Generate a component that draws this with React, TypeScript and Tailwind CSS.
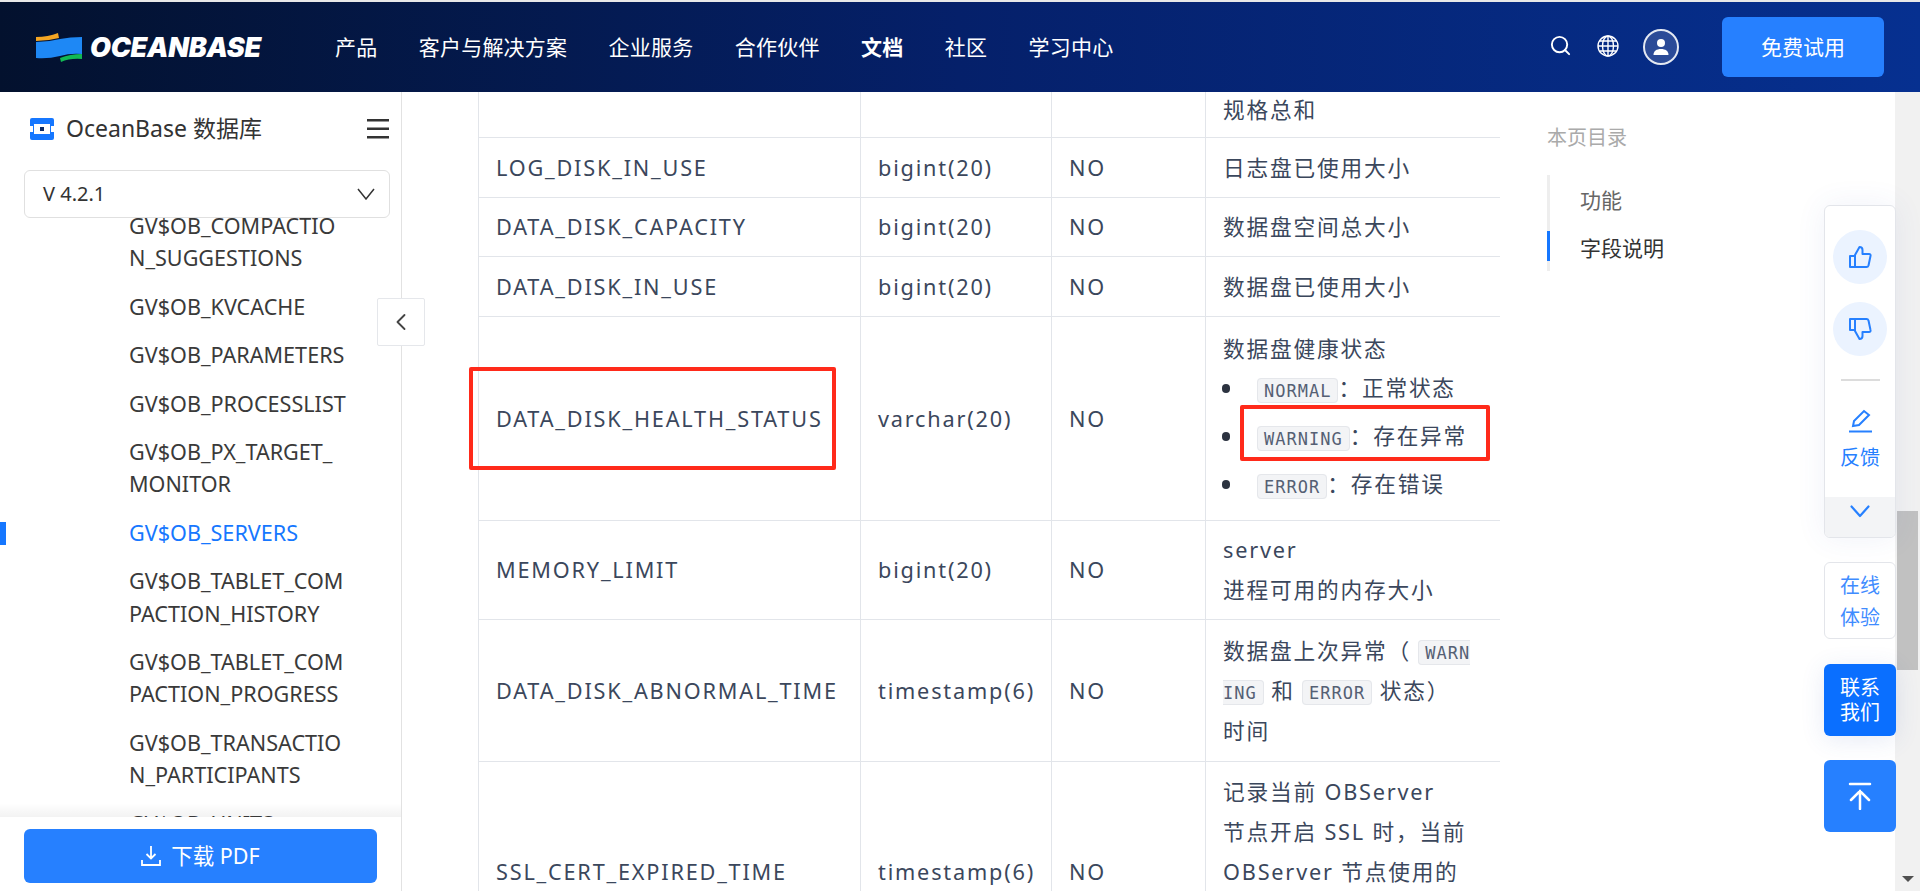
import { ChevronLeft, Search } from "lucide-react";

const navLinks = ["产品", "客户与解决方案", "企业服务", "合作伙伴", "文档", "社区", "学习中心"];

const treeItems = [
	"GV$OB_COMPACTION_SUGGESTIONS",
	"GV$OB_KVCACHE",
	"GV$OB_PARAMETERS",
	"GV$OB_PROCESSLIST",
	"GV$OB_PX_TARGET_MONITOR",
	"GV$OB_SERVERS",
	"GV$OB_TABLET_COMPACTION_HISTORY",
	"GV$OB_TABLET_COMPACTION_PROGRESS",
	"GV$OB_TRANSACTION_PARTICIPANTS",
	"GV$OB_UNITS",
];

const Code = ({ children }: { children: string }) => (
	<code className="break-all rounded-[4px] border border-[#e5e7eb] bg-[#f3f4f6] px-[6px] py-[1.5px] font-['DejaVu_Sans_Mono',monospace] text-[17px] leading-none tracking-[1px] text-[#556074]">
		{children}
	</code>
);

const Row = ({ name, type, pad = "", children }: { name: string; type: string; pad?: string; children: React.ReactNode }) => (
	<tr className={`border-b border-[#e2e5ea] ${pad}`}>
		<td className="border-x border-[#e2e5ea] py-[9.5px] pl-[17px] pr-0 align-middle">{name}</td>
		<td className="border-r border-[#e2e5ea] py-[9.5px] pl-[17px] align-middle">{type}</td>
		<td className="border-r border-[#e2e5ea] py-[9.5px] pl-[17px] align-middle">{type ? "NO" : ""}</td>
		<td className="py-[9.5px] pl-[17px] pr-[26px] align-middle">{children}</td>
	</tr>
);

const Bullet = ({ children }: { children: React.ReactNode }) => (
	<li className="relative h-[48px] leading-[48px]">
		<span className="absolute -left-[35px] top-[20px] h-[9px] w-[8px] rounded-full bg-[#2c3340]" />
		{children}
	</li>
);

const Thumb = ({ down }: { down?: boolean }) => (
	<svg width="24" height="24" viewBox="0 0 24 24" fill="none" stroke="#2680ff" strokeWidth="2" strokeLinejoin="round">
		<g transform={down ? "translate(0 24) scale(1 -1)" : undefined}>
			<path d="M7 22V10l4.500-8q3 0 3 3v4H21q2 0 1.500 2l-2 9.500Q20 22 18.500 22z" />
			<path d="M2 11h5v11H2z" />
		</g>
	</svg>
);

const Logo = () => (
	<div className="flex items-center gap-[8px]">
		<svg width="46" height="29" viewBox="0 0 46 29">
			<path d="M0 4 Q12 4 22 0 L23 5 Q12 8 0 8Z" fill="#f5a623" />
			<path d="M0 9 Q12 9 24 6 Q34 4 46 4 V21 Q34 20 24 23 Q12 26 0 25Z" fill="#1e88f5" />
			<path d="M24 25 Q34 21 46 21 V26 Q34 25 25 29Z" fill="#12b954" />
		</svg>
		<span className="font-['Inter',sans-serif] text-[27px] font-black italic leading-none tracking-[-0.3px] text-white">
			OCEANBASE
		</span>
	</div>
);

const Header = () => (
	<header className="flex h-[90px] shrink-0 items-center bg-linear-to-r from-[#03112e] via-[#05206a] to-[#063090] pl-[36px] pr-[36px]">
		<Logo />
		<nav className="ml-[74px] flex gap-[41.400px] pt-[2px] text-[21px] tracking-[0.2px] text-white">
			{navLinks.map((link) => (
				<a key={link} className={link === "文档" ? "font-bold" : ""}>
					{link}
				</a>
			))}
		</nav>
		<div className="ml-auto flex items-center">
			<Search size={23} strokeWidth={2} className="-mt-[3px] text-white" />
			<svg width="22" height="22" viewBox="0 0 22 22" fill="none" stroke="white" strokeWidth="1.400" className="ml-[25px] -mt-[3px]">
				<circle cx="11" cy="11" r="10" />
				<ellipse cx="11" cy="11" rx="5.500" ry="10" />
				<path d="M11 1v20M1 11h20M2.500 6h17M2.500 16h17" />
			</svg>
			<div className="ml-[24px] flex h-[36px] w-[36px] items-center justify-center rounded-full border-2 border-[#e3e8f2] bg-white/15">
				<svg width="18" height="18" viewBox="0 0 18 18" fill="white">
					<circle cx="9" cy="5" r="4" />
					<path d="M1.500 17c0-4 3-6 7.500-6s7.500 2 7.500 6z" />
				</svg>
			</div>
			<button className="ml-[43px] h-[60px] w-[162px] rounded-[6px] bg-[#2680ff] pt-[1px] text-[21px] text-white">免费试用</button>
		</div>
	</header>
);

const Sidebar = () => (
	<aside className="relative flex w-[402px] shrink-0 flex-col border-r border-[#e2e2e2] bg-white">
		<div className="flex h-[78px] shrink-0 items-center pb-[5px] pl-[30px] pr-[12px]">
			<svg width="24" height="22" viewBox="0 0 24 22">
				<rect width="24" height="22" rx="2" fill="#1677ff" />
				<rect x="4" y="6" width="16" height="10" fill="white" />
				<rect x="0" y="8" width="3" height="6" fill="white" />
				<rect x="21" y="8" width="3" height="6" fill="white" />
				<rect x="10" y="9" width="4" height="4" fill="#0b2a66" />
			</svg>
			<span className="ml-[12px] text-[23px] text-[#333]">OceanBase 数据库</span>
			<svg width="22" height="20" viewBox="0 0 22 20" className="ml-auto" fill="#333">
				<rect width="22" height="2.500" />
				<rect y="8.500" width="22" height="2.500" />
				<rect y="17" width="22" height="2.500" />
			</svg>
		</div>
		<div className="z-10 ml-[24px] mr-[11px] flex h-[48px] shrink-0 items-center justify-between rounded-[6px] border border-[#e0e0e0] bg-white pl-[18px] pr-[14px] text-[20px] text-[#333]">
			V 4.2.1
			<svg width="18" height="12" viewBox="0 0 18 12" fill="none" stroke="#333" strokeWidth="1.500">
				<path d="M1 1l8 10 8-10" />
			</svg>
		</div>
		<div className="relative min-h-0 flex-1 overflow-hidden">
			<ul className="-mt-[16px] pl-[129px] text-[21.600px] leading-[32.400px] text-[#3a3a3a]">
				{treeItems.map((item) => (
					<li key={item} className={`relative w-[345px] break-all py-[8px] pr-[126px] ${item === "GV$OB_SERVERS" ? "text-[#1677ff]" : ""}`}>
						{item === "GV$OB_SERVERS" && <span className="absolute -left-[129px] top-[13px] h-[23px] w-[6px] bg-[#1677ff]" />}
						{item}
					</li>
				))}
			</ul>
			<div className="absolute inset-x-0 bottom-0 h-[14px] bg-linear-to-b from-transparent to-black/5" />
		</div>
		<div className="z-10 h-[74px] shrink-0 bg-white pl-[24px] pt-[12px]">
			<button className="flex h-[54px] w-[353px] items-center justify-center gap-[10px] rounded-[6px] bg-[#2680ff] text-[21.500px] text-white">
				<svg width="20" height="20" viewBox="0 0 20 20" fill="none" stroke="white" strokeWidth="1.800">
					<path d="M10 0v12M5.500 8l4.500 4.500L14.500 8M1 14v5h18v-5" />
				</svg>
				下载 PDF
			</button>
		</div>
		<button className="absolute left-[377px] top-[206px] z-20 flex h-[48px] w-[48px] items-center justify-center rounded-[2px] border border-[#e5e7eb] bg-white text-[#444]">
			<ChevronLeft size={28} strokeWidth={1.600} />
		</button>
	</aside>
);

const FieldTable = () => (
	<div className="min-w-0 flex-1 overflow-hidden pl-[76px]">
		<table className="-mt-[94px] w-[1021px] table-fixed border-collapse text-[21.700px] leading-[40px] tracking-[1.800px] text-[#3b475c]">
			<colgroup>
				<col className="w-[382px]" />
				<col className="w-[191px]" />
				<col className="w-[154px]" />
				<col className="w-[294px]" />
			</colgroup>
			<tbody>
				<Row name="" type="">
					<div className="h-[120px] pt-[82px]">规格总和</div>
				</Row>
				<Row name="LOG_DISK_IN_USE" type="bigint(20)">日志盘已使用大小</Row>
				<Row name="DATA_DISK_CAPACITY" type="bigint(20)" pad="[&>td]:py-[9px]">数据盘空间总大小</Row>
				<Row name="DATA_DISK_IN_USE" type="bigint(20)">数据盘已使用大小</Row>
				<Row name="DATA_DISK_HEALTH_STATUS" type="varchar(20)">
					<div className="pt-[2px]">数据盘健康状态</div>
					<ul className="-mt-[4.500px] mb-[2.500px] ml-[34px] list-none">
						<Bullet><Code>NORMAL</Code>：正常状态</Bullet>
						<Bullet><Code>WARNING</Code>：存在异常</Bullet>
						<Bullet><Code>ERROR</Code>：存在错误</Bullet>
					</ul>
				</Row>
				<Row name="MEMORY_LIMIT" type="bigint(20)" pad="[&>td]:py-[9px]">server<br />进程可用的内存大小</Row>
				<Row name="DATA_DISK_ABNORMAL_TIME" type="timestamp(6)" pad="[&>td]:py-[10.500px]">
					数据盘上次异常（ <Code>WARNING</Code> 和 <Code>ERROR</Code> 状态）<br />时间
				</Row>
				<Row name="SSL_CERT_EXPIRED_TIME" type="timestamp(6)">
					记录当前 OBServer<br />节点开启 SSL 时，当前<br />OBServer 节点使用的<br />SSL 证书的过期<br />时间
				</Row>
			</tbody>
		</table>
	</div>
);

const Toc = () => (
	<div className="w-[348px] shrink-0 pt-[32px] text-[21px]">
		<div className="text-[20px] leading-[28px] text-[#aaa]">本页目录</div>
		<div className="mt-[23px] flex flex-col border-l-[3px] border-[#eeeeee] pl-[30px]">
			<div className="h-[48px] pt-[1px] leading-[48px] text-[#666]">功能</div>
			<div className="relative h-[48px] pt-[1px] leading-[48px] text-[#333]">
				<span className="absolute -left-[33px] top-[8px] h-[30px] w-[3px] bg-[#1677ff]" />
				字段说明
			</div>
		</div>
	</div>
);

const Scrollbar = () => (
	<div className="flex w-[25px] shrink-0 flex-col items-center bg-[#f1f1f1] pt-[419px]">
		<div className="h-[159px] w-[21px] bg-[#c1c1c1]" />
		<div className="mt-auto mb-[9px] h-0 w-0 border-x-[6px] border-t-[6px] border-x-transparent border-t-[#505050]" />
	</div>
);

const FloatTools = () => (
	<div className="absolute left-[1824px] top-[205px] z-30 flex w-[72px] flex-col text-[20px]">
		<div className="h-[333px] overflow-hidden rounded-[6px] border border-[#e3e5ea] bg-white shadow-[0_0_30px_rgba(60,90,180,0.08)]">
			<div className="flex flex-col items-center pt-[24px]">
				<div className="flex h-[54px] w-[54px] items-center justify-center rounded-full bg-[#ebf3ff]">
					<Thumb />
				</div>
				<div className="mt-[18px] flex h-[54px] w-[54px] items-center justify-center rounded-full bg-[#ebf3ff]">
					<Thumb down />
				</div>
				<div className="mt-[23px] h-[2px] w-[39px] bg-[#dcdcdc]" />
				<svg width="24" height="24" viewBox="0 0 24 24" fill="none" stroke="#2680ff" strokeWidth="2" className="mt-[28px]">
					<path d="M5 17l1-5L16 2l5 4-10 10z" />
					<path d="M1 22.500h23" />
				</svg>
				<div className="mt-[11px] leading-[28px] text-[#2680ff]">反馈</div>
			</div>
			<div className="mt-[25px] flex h-[41px] items-start justify-center bg-[#f3f4f6] pt-[8px]">
				<svg width="20" height="13" viewBox="0 0 20 13" fill="none" stroke="#2680ff" strokeWidth="2.200" strokeLinecap="round" strokeLinejoin="round">
					<path d="M1.500 1.500l8.500 9.500 8.500-9.500" />
				</svg>
			</div>
		</div>
		<div className="mt-[24px] flex h-[77px] flex-col items-center justify-center rounded-[6px] border border-[#e3e5ea] bg-white pt-[3px] leading-[32px] text-[#3f8cff]">
			<span>在线</span>
			<span>体验</span>
		</div>
		<div className="mt-[25px] flex h-[72px] flex-col items-center justify-center rounded-[6px] bg-[#0a6fff] leading-[25px] text-white shadow-[0_4px_24px_rgba(60,90,180,0.12)]">
			<span>联系</span>
			<span>我们</span>
		</div>
		<div className="mt-[24px] flex h-[72px] items-center justify-center rounded-[6px] bg-[#2680ff]">
			<svg width="24" height="28" viewBox="0 0 24 28" fill="none" stroke="white" strokeWidth="2.500" strokeLinecap="round">
				<path d="M2 2h20M12 9v18M3 18l9-9 9 9" />
			</svg>
		</div>
	</div>
);

export default function App() {
	return (
		<div className="relative flex h-[891px] w-[1920px] flex-col overflow-hidden bg-white font-['Noto_Sans','Noto_Sans_CJK_SC',sans-serif]">
			<div className="h-[2px] shrink-0 bg-[#e8e8e8]" />
			<Header />
			<main className="flex min-h-0 flex-1">
				<Sidebar />
				<FieldTable />
				<Toc />
				<Scrollbar />
			</main>
			<FloatTools />
			{/* red annotation boxes drawn on top of the screenshot */}
			<div className="absolute left-[469px] top-[367px] z-20 h-[103px] w-[367px] rounded-[2px] border-[4px] border-[#ff2a1a]" />
			<div className="absolute left-[1240px] top-[405px] z-20 h-[56px] w-[250px] rounded-[2px] border-[4px] border-[#ff2a1a]" />
		</div>
	);
}
